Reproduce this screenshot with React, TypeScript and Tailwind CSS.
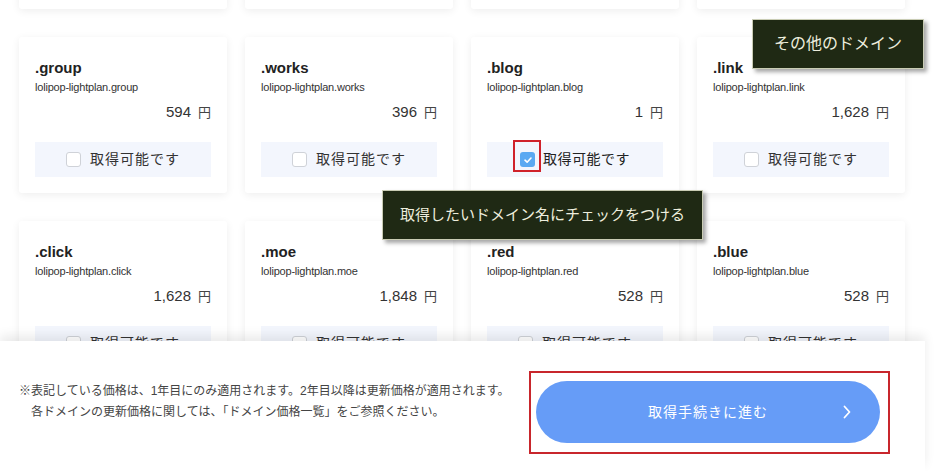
import React from "react";

type Domain = {
  tld: string;
  price: string;
  checked?: boolean;
  hidden?: boolean;
};

const domains: Domain[] = [
  { tld: ".shop", price: "398", hidden: true },
  { tld: ".site", price: "198", hidden: true },
  { tld: ".online", price: "198", hidden: true },
  { tld: ".xyz", price: "198", hidden: true },
  { tld: ".group", price: "594" },
  { tld: ".works", price: "396" },
  { tld: ".blog", price: "1", checked: true },
  { tld: ".link", price: "1,628" },
  { tld: ".click", price: "1,628" },
  { tld: ".moe", price: "1,848" },
  { tld: ".red", price: "528" },
  { tld: ".blue", price: "528" },
];

const DomainCard = ({ d }: { d: Domain }) => {
  // the first row is scrolled out of view; only the card bottoms show
  if (d.hidden) {
    return <div className="w-[208px] h-[156px] bg-white rounded-[3px] shadow-[0_2px_8px_rgba(0,0,0,0.07)]" />;
  }
  return (
    <div className="w-[208px] h-[156px] bg-white rounded-[3px] shadow-[0_2px_8px_rgba(0,0,0,0.07)] px-4 pt-[22px]">
      <div className="text-[15px] font-bold leading-[18px] text-[#222]">{d.tld}</div>
      <div className="text-[11px] leading-[14px] mt-[3px] text-[#333] tracking-[-0.2px]">
        lolipop-lightplan{d.tld}
      </div>
      <div className="flex justify-end items-baseline gap-[7px] mt-[9px] leading-[18px]">
        <span className="text-[15px] text-[#333]">{d.price}</span>
        <span className="text-[13px] text-[#444]">円</span>
      </div>
      <div className="mt-[20px] h-[35px] bg-[#f3f6fd] flex items-center justify-center">
        <div className="relative flex items-center">
          {d.checked ? (
            <>
              <span className="w-[15px] h-[15px] rounded-[3px] bg-[#5aa9f2] flex items-center justify-center">
                <svg width="10" height="10" viewBox="0 0 10 10" fill="none">
                  <path d="M2 5.2 L4.1 7.2 L8 3" stroke="white" strokeWidth="1.6" strokeLinecap="round" strokeLinejoin="round" />
                </svg>
              </span>
              <span className="absolute left-[-7px] top-[-9px] w-[28px] h-[32px] border-2 border-[#d0222a]" />
              <span className="ml-[8px] text-[14px] text-[#222] tracking-[0.5px]">取得可能です</span>
            </>
          ) : (
            <>
              <span className="w-[15px] h-[15px] rounded-[3px] bg-white border border-[#cfd2d8]" />
              <span className="ml-[9px] text-[14px] text-[#333] tracking-[1px]">取得可能です</span>
            </>
          )}
        </div>
      </div>
    </div>
  );
};

export default function App() {
  return (
    <div
      className="relative w-[939px] h-[471px] overflow-hidden bg-white"
      style={{ fontFamily: '"Liberation Sans", "Noto Sans CJK JP", sans-serif' }}
    >
      <div className="grid grid-cols-[repeat(4,208px)] gap-x-[18px] gap-y-[28px] pl-[19px] mt-[-147px]">
        {domains.map((d) => (
          <DomainCard key={d.tld} d={d} />
        ))}
      </div>

      {/* annotations */}
      <div className="absolute left-[752px] top-[19px] w-[172px] h-[50px] bg-[#1f2914] border border-[#c9ccb4] shadow-[3px_3px_4px_rgba(0,0,0,0.35)] flex items-center justify-center text-[16px] text-[#eeeede]">
        その他のドメイン
      </div>
      <div className="absolute left-[382px] top-[190px] w-[321px] h-[50px] bg-[#1f2914] border border-[#c9ccb4] shadow-[3px_3px_4px_rgba(0,0,0,0.35)] flex items-center justify-center text-[15px] text-[#eeeede]">
        取得したいドメイン名にチェックをつける
      </div>

      {/* footer bar */}
      <div className="absolute left-0 bottom-0 w-[925px] h-[130px] bg-white shadow-[0_-6px_10px_rgba(0,0,0,0.08)] flex items-start">
        <div className="pl-[19px] pt-[40px] w-[529px] shrink-0 text-[12px] leading-[21px] text-[#444]">
          <p className="whitespace-nowrap">※表記している価格は、1年目にのみ適用されます。2年目以降は更新価格が適用されます。</p>
          <p className="pl-[12px] whitespace-nowrap">各ドメインの更新価格に関しては、「ドメイン価格一覧」をご参照ください。</p>
        </div>
        <div className="mt-[30px] border-2 border-[#c8262c] pt-[8px] pb-[9px] pl-[5px] pr-[8px]">
          <button className="relative w-[344px] h-[62px] rounded-full bg-[#669cf7] text-white text-[14px] tracking-[1px] flex items-center justify-center">
            取得手続きに進む
            <svg className="absolute right-[28px] top-[23px]" width="10" height="16" viewBox="0 0 10 16" fill="none">
              <path d="M2.5 2.5 L7.5 8 L2.5 13.5" stroke="white" strokeWidth="1.8" strokeLinecap="round" strokeLinejoin="round" />
            </svg>
          </button>
        </div>
      </div>
    </div>
  );
}
